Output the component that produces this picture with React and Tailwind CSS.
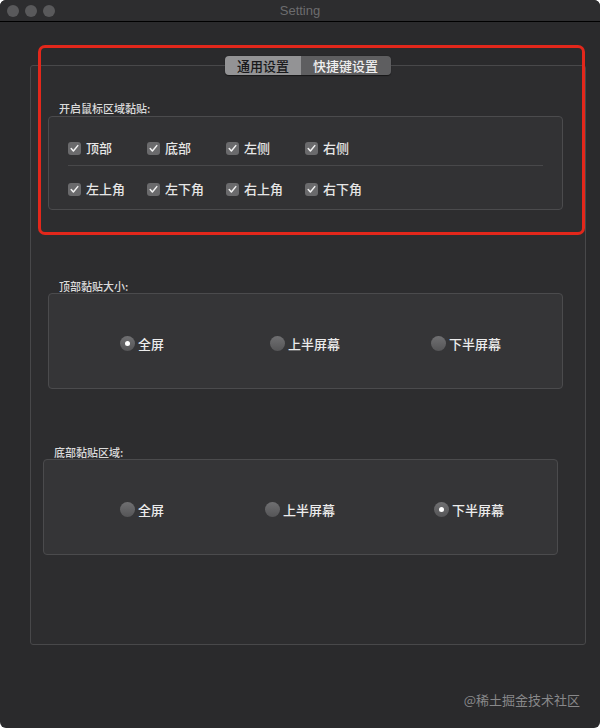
import React from "react";

const FONT = { fontFamily: '"Noto Sans CJK SC", "Noto Sans", sans-serif' };

function Check({ label }) {
  return (
    <div className="flex w-[79px] items-center shrink-0">
      <div className="flex h-[13px] w-[13px] items-center justify-center rounded-[3px] bg-[#6a6a6c]">
        <svg width="9" height="9" viewBox="0 0 9 9" fill="none">
          <path d="M1.2 4.6 L3.4 7 L7.8 1.6" stroke="#f2f2f2" strokeWidth="1.5" strokeLinecap="round" strokeLinejoin="round" />
        </svg>
      </div>
      <span className="ml-[5px] text-[13px] font-medium leading-[14px] text-[#e6e6e6]">{label}</span>
    </div>
  );
}

function Radio({ label, checked, w }) {
  return (
    <div className="flex items-center shrink-0" style={{ width: w }}>
      <div className="flex h-[15px] w-[15px] items-center justify-center rounded-full bg-gradient-to-b from-[#707072] to-[#555557]">
        {checked && <div className="h-[5px] w-[5px] rounded-full bg-white" />}
      </div>
      <span className="ml-[3px] text-[13px] font-medium leading-[15px] text-[#ececec]">{label}</span>
    </div>
  );
}

export default function App() {
  return (
    <div className="h-[728px] w-[600px] bg-white" style={FONT}>
      <div className="relative flex h-[728px] w-[600px] flex-col overflow-hidden rounded-[6px] bg-[#2a2a2c]">
        {/* title bar */}
        <div className="relative flex h-[22px] shrink-0 items-center border-b border-black bg-[#2d2d2f]">
          <div className="ml-[7px] flex gap-[6px]">
            <div className="h-[12px] w-[12px] rounded-full bg-[#59595b]" />
            <div className="h-[12px] w-[12px] rounded-full bg-[#59595b]" />
            <div className="h-[12px] w-[12px] rounded-full bg-[#59595b]" />
          </div>
          <div
            className="absolute inset-x-0 top-0 flex h-[21px] items-center justify-center text-[13px] text-[#6c6c6e]"
            style={{ fontFamily: '"Liberation Sans", Arial, sans-serif' }}
          >
            Setting
          </div>
        </div>

        {/* tab view */}
        <div className="ml-[30px] mt-[43px] h-[580px] w-[556px] rounded-[3px] border border-[#48484a] bg-[#2d2d2f]">
          <div className="-mt-[10px] flex justify-center">
            <div className="flex h-[19px] overflow-hidden rounded-[4px] text-[13px] font-medium leading-[19px] shadow-[0_0.5px_1px_rgba(0,0,0,0.5)]">
              <div className="bg-[#939395] px-[12px] text-[#18181a]">通用设置</div>
              <div className="bg-[#5e5e60] px-[12px] pr-[13px] text-[#f0f0f0]">快捷键设置</div>
            </div>
          </div>

          {/* section 1 */}
          <div className="ml-[17px] mr-[22px] mt-[26px]">
            <div className="ml-[11px] mb-[1px] h-[14px] text-[11px] font-medium leading-[14px] text-[#dadada]">开启鼠标区域黏贴:</div>
            <div className="h-[94px] rounded-[4px] border border-[#4b4b4d] bg-[#323234] px-[19px] pt-[24px]">
              <div className="flex h-[14px] items-center">
                <Check label="顶部" />
                <Check label="底部" />
                <Check label="左侧" />
                <Check label="右侧" />
              </div>
              <div className="mt-[10px] h-px bg-[#48484a]" />
              <div className="mt-[16px] flex h-[14px] items-center">
                <Check label="左上角" />
                <Check label="左下角" />
                <Check label="右上角" />
                <Check label="右下角" />
              </div>
            </div>
          </div>

          {/* section 2 */}
          <div className="ml-[17px] mr-[22px] mt-[69px]">
            <div className="ml-[11px] h-[14px] text-[11px] font-medium leading-[14px] text-[#dadada]">顶部黏贴大小:</div>
            <div className="flex h-[96px] items-start rounded-[4px] border border-[#4b4b4d] bg-[#353537] pl-[71px] pt-[42px]">
              <Radio label="全屏" checked w="150px" />
              <Radio label="上半屏幕" w="161px" />
              <Radio label="下半屏幕" w="100px" />
            </div>
          </div>

          {/* section 3 */}
          <div className="ml-[12px] mr-[27px] mt-[56px]">
            <div className="ml-[11px] h-[14px] text-[11px] font-medium leading-[14px] text-[#dadada]">底部黏贴区域:</div>
            <div className="flex h-[96px] items-start rounded-[4px] border border-[#4b4b4d] bg-[#353537] pl-[76px] pt-[42px]">
              <Radio label="全屏" w="145px" />
              <Radio label="上半屏幕" w="169px" />
              <Radio label="下半屏幕" checked w="100px" />
            </div>
          </div>
        </div>

        <div className="mt-[47px] flex justify-end pr-[20px] text-[13px] leading-[16px] text-[#88888a]">@稀土掘金技术社区</div>

        {/* red annotation */}
        <div className="pointer-events-none absolute left-[38px] top-[45px] h-[190px] w-[547px] rounded-[7px] border-[3px] border-[#e2271b]" />
      </div>
    </div>
  );
}
